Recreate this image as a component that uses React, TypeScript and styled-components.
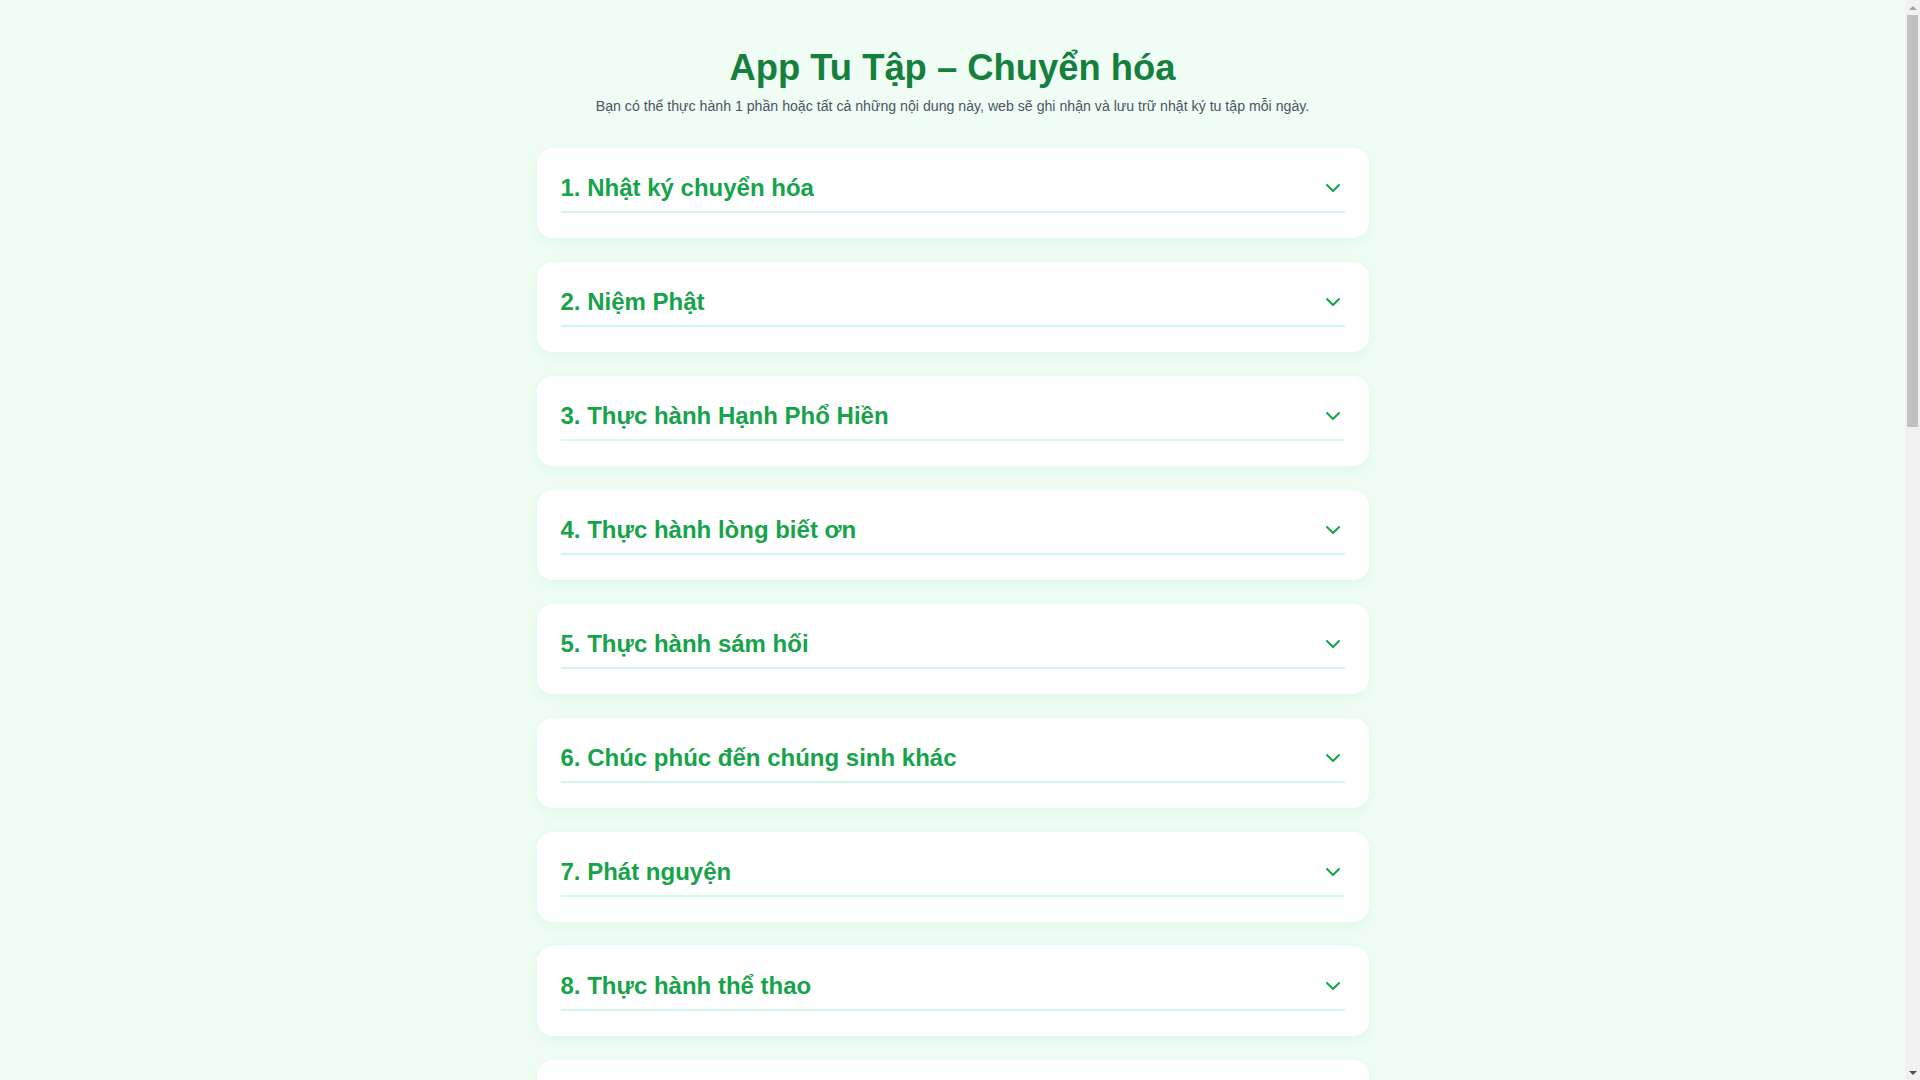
import React from "react";
import styled, { createGlobalStyle } from "styled-components";

const GlobalStyle = createGlobalStyle`
  html, body {
    margin: 0;
    padding: 0;
    background: #f0fdf4;
    font-family: "Liberation Sans", Arial, sans-serif;
  }
  * {
    box-sizing: border-box;
  }
`;

export const Page = styled.div`
  min-height: 100vh;
  padding: 47px 31px 40px 16px;
`;

export const Header = styled.header`
  text-align: center;
  margin-bottom: 32px;
`;

export const Title = styled.h1`
  margin: 0 0 7px;
  font-size: 36.4px;
  line-height: 42px;
  font-weight: 700;
  color: #15803d;
`;

export const Subtitle = styled.p`
  margin: 0;
  font-size: 14.15px;
  line-height: 20px;
  color: #4b5563;
`;

export const List = styled.div`
  width: 832px;
  margin: 0 auto;
  display: flex;
  flex-direction: column;
  gap: 24px;
`;

export const Card = styled.section`
  background: #ffffff;
  border-radius: 16px;
  padding: 25px 24px 25px;
  box-shadow: 0 4px 14px rgba(16, 185, 129, 0.08);
`;

export const CardHead = styled.button`
  width: 100%;
  display: flex;
  align-items: center;
  justify-content: space-between;
  padding: 0 0 8px;
  margin: 0;
  background: none;
  border: none;
  border-bottom: 2px solid #d1fae5;
  cursor: pointer;
  font-family: inherit;
  text-align: left;
`;

export const CardTitle = styled.h2`
  margin: 0;
  font-size: 24px;
  line-height: 30px;
  font-weight: 700;
  color: #16a34a;
`;

/* stand-in for the browser's scrollbar seen in the screenshot */
export const ScrollTrack = styled.div`
  position: fixed;
  top: 0;
  right: 0;
  width: 15px;
  height: 100vh;
  background: #f1f1f1;
  display: flex;
  flex-direction: column;
  align-items: center;
`;

export const ScrollArrow = styled.div<{ $down?: boolean; $color: string }>`
  width: 15px;
  height: 15px;
  display: flex;
  align-items: center;
  justify-content: center;
  margin-top: ${({ $down }) => ($down ? "auto" : "0")};
  &::before {
    content: "";
    border-left: 4px solid transparent;
    border-right: 4px solid transparent;
    ${({ $down, $color }) =>
      $down
        ? `border-top: 4px solid ${$color};`
        : `border-bottom: 4px solid ${$color};`}
  }
`;

export const ScrollThumb = styled.div`
  width: 11px;
  height: 412px;
  background: #c1c1c1;
`;

const Chevron = () => (
  <svg
    width="24"
    height="24"
    viewBox="0 0 24 24"
    fill="none"
    stroke="#16a34a"
    strokeWidth="2"
    strokeLinecap="round"
    strokeLinejoin="round"
  >
    <path d="m6 9 6 6 6-6" />
  </svg>
);

const sections = [
  "1. Nhật ký chuyển hóa",
  "2. Niệm Phật",
  "3. Thực hành Hạnh Phổ Hiền",
  "4. Thực hành lòng biết ơn",
  "5. Thực hành sám hối",
  "6. Chúc phúc đến chúng sinh khác",
  "7. Phát nguyện",
  "8. Thực hành thể thao",
  "9. Thiền định",
];

const App = () => {
  return (
    <>
      <GlobalStyle />
      <Page>
        <Header>
          <Title>App Tu Tập – Chuyển hóa</Title>
          <Subtitle>
            Bạn có thể thực hành 1 phần hoặc tất cả những nội dung này, web sẽ
            ghi nhận và lưu trữ nhật ký tu tập mỗi ngày.
          </Subtitle>
        </Header>
        <List>
          {sections.map((s) => (
            <Card key={s}>
              <CardHead>
                <CardTitle>{s}</CardTitle>
                <Chevron />
              </CardHead>
            </Card>
          ))}
        </List>
      </Page>
      <ScrollTrack aria-hidden>
        <ScrollArrow $color="#a3a3a3" />
        <ScrollThumb />
        <ScrollArrow $down $color="#505050" />
      </ScrollTrack>
    </>
  );
};

export default App;
